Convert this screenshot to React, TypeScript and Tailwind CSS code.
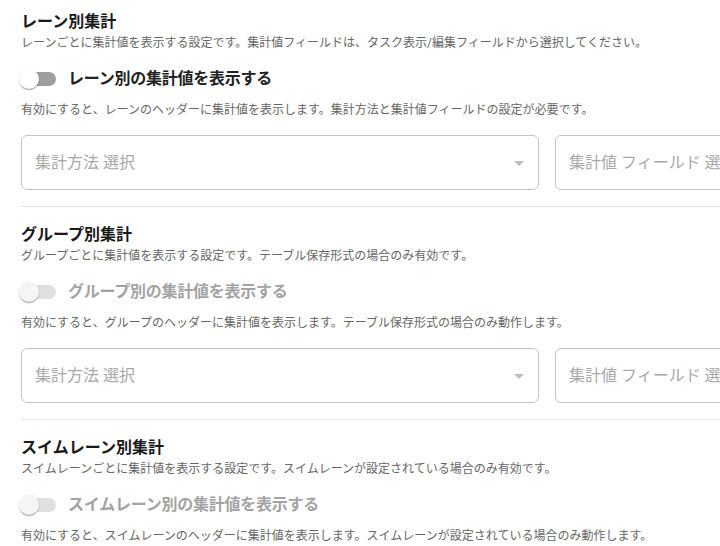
type Section = {
  title: string;
  description: string;
  toggleLabel: string;
  helper: string;
  disabled: boolean;
};

const sections: Section[] = [
  {
    title: 'レーン別集計',
    description:
      'レーンごとに集計値を表示する設定です。集計値フィールドは、タスク表示/編集フィールドから選択してください。',
    toggleLabel: 'レーン別の集計値を表示する',
    helper: '有効にすると、レーンのヘッダーに集計値を表示します。集計方法と集計値フィールドの設定が必要です。',
    disabled: false,
  },
  {
    title: 'グループ別集計',
    description: 'グループごとに集計値を表示する設定です。テーブル保存形式の場合のみ有効です。',
    toggleLabel: 'グループ別の集計値を表示する',
    helper: '有効にすると、グループのヘッダーに集計値を表示します。テーブル保存形式の場合のみ動作します。',
    disabled: true,
  },
  {
    title: 'スイムレーン別集計',
    description: 'スイムレーンごとに集計値を表示する設定です。スイムレーンが設定されている場合のみ有効です。',
    toggleLabel: 'スイムレーン別の集計値を表示する',
    helper: '有効にすると、スイムレーンのヘッダーに集計値を表示します。スイムレーンが設定されている場合のみ動作します。',
    disabled: true,
  },
];

// Unchecked switch: thumb sits at the left end of the track.
function Switch({ disabled }: { disabled: boolean }) {
  return (
    <span className="relative ml-[-11px] inline-flex h-[38px] w-[58px] shrink-0 items-center">
      <span
        className={`absolute left-[12px] top-[12px] h-[14px] w-[34px] rounded-full ${
          disabled ? 'bg-[#e0e0e0]' : 'bg-[#9e9e9e]'
        }`}
      />
      <span
        className={`absolute left-[9px] top-[9px] h-[20px] w-[20px] rounded-full shadow-[0_2px_1px_-1px_rgba(0,0,0,0.2),0_1px_1px_0_rgba(0,0,0,0.14),0_1px_3px_0_rgba(0,0,0,0.12)] ${
          disabled ? 'bg-[#f5f5f5]' : 'bg-white'
        }`}
      />
    </span>
  );
}

function SelectBox({ placeholder, arrow }: { placeholder: string; arrow?: boolean }) {
  return (
    <div className="relative flex h-[55px] w-[518px] shrink-0 items-center rounded-[6px] border border-[#c4c4c4] pl-[13px]">
      <span className="whitespace-nowrap text-[16px] text-[#a8a8a8]">{placeholder}</span>
      {arrow && (
        <svg className="absolute right-[7px] top-[15px]" width="24" height="24" viewBox="0 0 24 24">
          <path d="M7 10l5 5 5-5z" fill="#bdbdbd" />
        </svg>
      )}
    </div>
  );
}

export default function App() {
  return (
    <div className="h-screen w-full overflow-hidden bg-white font-['Roboto','Noto_Sans_CJK_JP',sans-serif]">
      <div className="w-[1100px] px-[21px] pt-[10px]">
        {sections.map((s, i) => (
          <div key={s.title} className={i > 0 ? 'border-t border-[#e6e6e6] pt-[16px]' : ''}>
            <h2 className="text-[16px] font-bold leading-[24px] text-[#1a1a1a]">{s.title}</h2>
            <p className="text-[12px] leading-[18px] text-[#666]">{s.description}</p>
            <div className="mt-[8px] flex items-center">
              <Switch disabled={s.disabled} />
              <span
                className={`text-[16px] font-bold leading-[24px] tracking-[-0.25px] ${
                  s.disabled ? 'text-[#a3a3a3]' : 'text-[#212121]'
                }`}
              >
                {s.toggleLabel}
              </span>
            </div>
            <p className="mt-[3px] text-[12px] leading-[18px] text-[#666]">{s.helper}</p>
            <div className="mb-[16px] mt-[16px] flex gap-[16px]">
              <SelectBox placeholder="集計方法 選択" arrow />
              <SelectBox placeholder="集計値 フィールド 選択" arrow />
            </div>
          </div>
        ))}
      </div>
    </div>
  );
}
